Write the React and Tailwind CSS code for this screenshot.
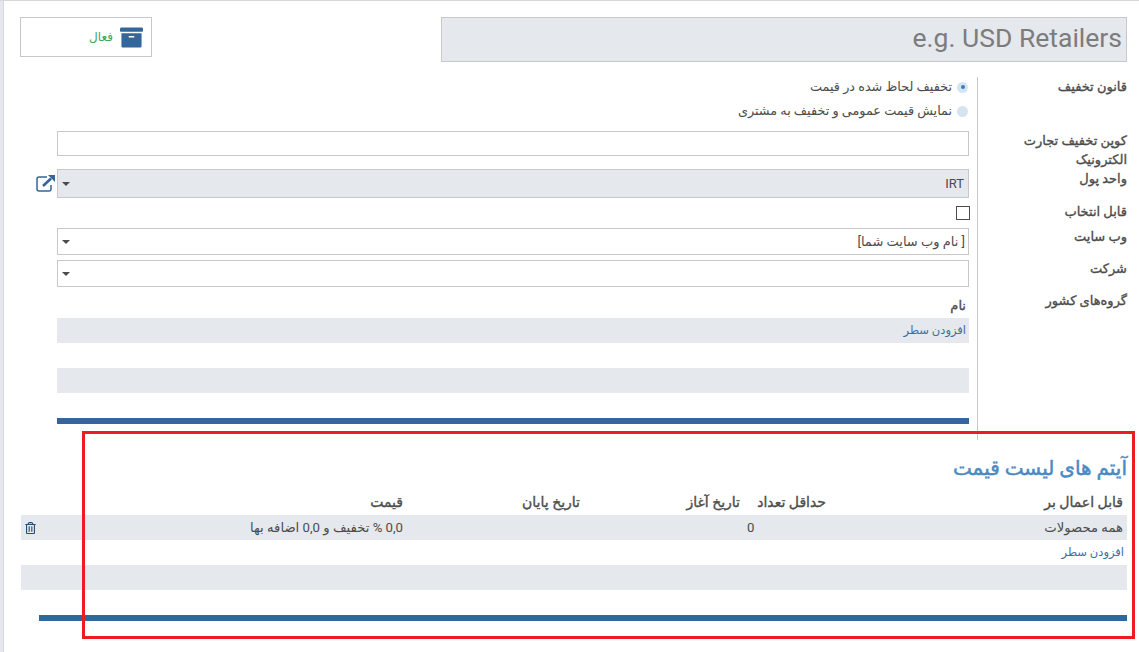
import React from 'react';
import { FaArchive, FaRegTrashAlt } from 'react-icons/fa';

const font = { fontFamily: 'Roboto, "DejaVu Sans", sans-serif' };
const strong = '[-webkit-text-stroke:0.35px_currentColor]';

const Caret = () => (
  <span className="w-0 h-0 border-x-[4px] border-x-transparent border-t-[4px] border-t-[#4c4c4c]" />
);

const Select = ({ children, className = '' }) => (
  <div className={`flex flex-1 items-center justify-between border border-[#c8c8c8] pr-[3px] pl-[4px] text-[13px] text-[#4c4c4c] ${className}`}>
    <span>{children}</span>
    <Caret />
  </div>
);

const Label = ({ children, className = '' }) => (
  <div className={`text-[13px] leading-[19px] text-[#4c4c4c] ${strong} ${className}`}>{children}</div>
);

const Radio = ({ checked, children, className = '' }) => (
  <div className={`flex items-center gap-[5px] pr-[1px] text-[12.8px] text-[#4c4c4c] ${className}`}>
    <span className="flex h-[11px] w-[11px] items-center justify-center rounded-full bg-[#d6e4ef]">
      {checked && <span className="h-[4px] w-[4px] rounded-full bg-[#2f80c8]" />}
    </span>
    <span>{children}</span>
  </div>
);

const ExternalLink = () => (
  <svg width="20" height="17" viewBox="0 0 20 17" fill="none" className="text-[#33669a]">
    <path d="M11 2H3a2 2 0 0 0-2 2v10a2 2 0 0 0 2 2h10a2 2 0 0 0 2-2v-4" stroke="currentColor" strokeWidth="1.5" />
    <path d="M7 11 15 3.5" stroke="currentColor" strokeWidth="2.6" />
    <path d="M12 0h7v7z" fill="currentColor" />
  </svg>
);

const App = () => {
  return (
    <div dir="rtl" style={font} className="relative h-[652px] w-[1139px] overflow-hidden border-t border-[#d5d9dc] bg-white">
      <div className="h-full border-l-[3px] border-[#e5e8ec]">
        <div className="h-full border-l border-[#d5d9dc] pr-[12px]">
          {/* header */}
          <div className="flex items-start justify-between pt-[16px] pl-[16px]">
            <div dir="ltr" className="flex h-[45px] w-[686px] items-center justify-end border border-[#c8c8c8] bg-[#e5e8ec] pr-[4px] pb-[4px] text-[26.5px] text-[#7c7c7c]">
              e.g. USD Retailers
            </div>
            <div className="flex h-[40px] w-[132px] items-center gap-[7px] border border-[#c8c8c8] pr-[8px] text-[12px] text-[#3aa655]">
              <FaArchive className="h-[23px] w-[23px] text-[#33669a]" />
              <span>فعال</span>
            </div>
          </div>

          {/* form */}
          <div className="mt-[15px] flex h-[363px]">
            <div className="w-[149px] shrink-0">
              <Label>قانون تخفیف</Label>
              <Label className="mt-[35px]">کوپن تخفیف تجارت<br />الکترونیک</Label>
              <Label>واحد پول</Label>
              <Label className="mt-[14px]">قابل انتخاب</Label>
              <Label className="mt-[6px]">وب سایت</Label>
              <Label className="mt-[13px]">شرکت</Label>
              <Label className="mt-[13px]">گروه‌های کشور</Label>
            </div>
            <div className="flex flex-1 flex-col border-r border-[#c8c8c8] pr-[8px] pl-[16px]">
              <div className="pl-[37px]">
                <Radio checked className="mt-[1px] h-[18px]">تخفیف لحاظ شده در قیمت</Radio>
                <Radio className="mt-[6px] h-[18px]">نمایش قیمت عمومی و تخفیف به مشتری</Radio>
                <div className="mt-[11px] h-[25px] border border-[#c8c8c8]" />
              </div>
              <div className="mt-[13px] flex h-[29px] items-center gap-[1px] pl-[16px]">
                <Select className="h-full bg-[#e5e8ec] !pr-[4px]">IRT</Select>
                <ExternalLink />
              </div>
              <div className="pl-[37px]">
                <div className="mt-[8px] mr-[-1px] h-[14px] w-[14px] border border-[#4c4c4c]" />
                <div className="mt-[8px] flex h-[27px]">
                  <Select>[ نام وب سایت شما]</Select>
                </div>
                <div className="mt-[5px] flex h-[27px]">
                  <Select />
                </div>
                <div className={`mt-[9px] h-[22px] pr-[3px] text-[13px] leading-[20px] text-[#4c4c4c] ${strong}`}>نام</div>
                <div className="flex h-[25px] items-center bg-[#e5e8ec] pr-[3px] text-[11.5px] text-[#3d6f9e]">افزودن سطر</div>
                <div className="mt-[25px] h-[25px] bg-[#e5e8ec]" />
                <div className="mt-[25px] h-[6px] bg-[#33669a]" />
              </div>
            </div>
          </div>

          {/* price list items */}
          <div className="pl-[17px]">
            <h2 className="mt-[15px] text-[20px] leading-[26px] text-[#4a8ac4] [-webkit-text-stroke:0.5px_currentColor]">آیتم های لیست قیمت</h2>
            <div className={`mt-[12px] grid h-[22px] grid-cols-[301px_81px_160px_177px_361px_26px] items-start text-[14px] leading-[18px] text-[#4c4c4c] ${strong}`}>
              <div className="pr-[4px]">قابل اعمال بر</div>
              <div>حداقل تعداد</div>
              <div className="pr-[5px]">تاریخ آغاز</div>
              <div className="pr-[5px]">تاریخ پایان</div>
              <div className="pr-[5px]">قیمت</div>
              <div />
            </div>
            <div className="grid h-[25px] grid-cols-[301px_81px_160px_177px_361px_26px] items-center bg-[#e5e8ec] text-[13.2px] text-[#4c4c4c]">
              <div className="pr-[4px]">همه محصولات</div>
              <div className="pl-[2px] text-left">0</div>
              <div />
              <div />
              <div className="pr-[5px]">0,0 % تخفیف و 0,0 اضافه بها</div>
              <div className="flex justify-start pr-[11px]">
                <FaRegTrashAlt className="h-[12px] w-[11px] text-[#2a4f73]" />
              </div>
            </div>
            <div className="flex h-[25px] items-center pr-[3px] text-[11.5px] text-[#3d6f9e]">افزودن سطر</div>
            <div className="h-[25px] bg-[#e5e8ec]" />
            <div className="mt-[25px] ml-[18px] h-[6px] bg-[#33669a]" />
          </div>
        </div>
      </div>

      {/* red annotation */}
      <div className="pointer-events-none absolute top-[430px] left-[82px] h-[208px] w-[1053px] border-[3px] border-[#ed1c24]" />
    </div>
  );
};

export default App;
